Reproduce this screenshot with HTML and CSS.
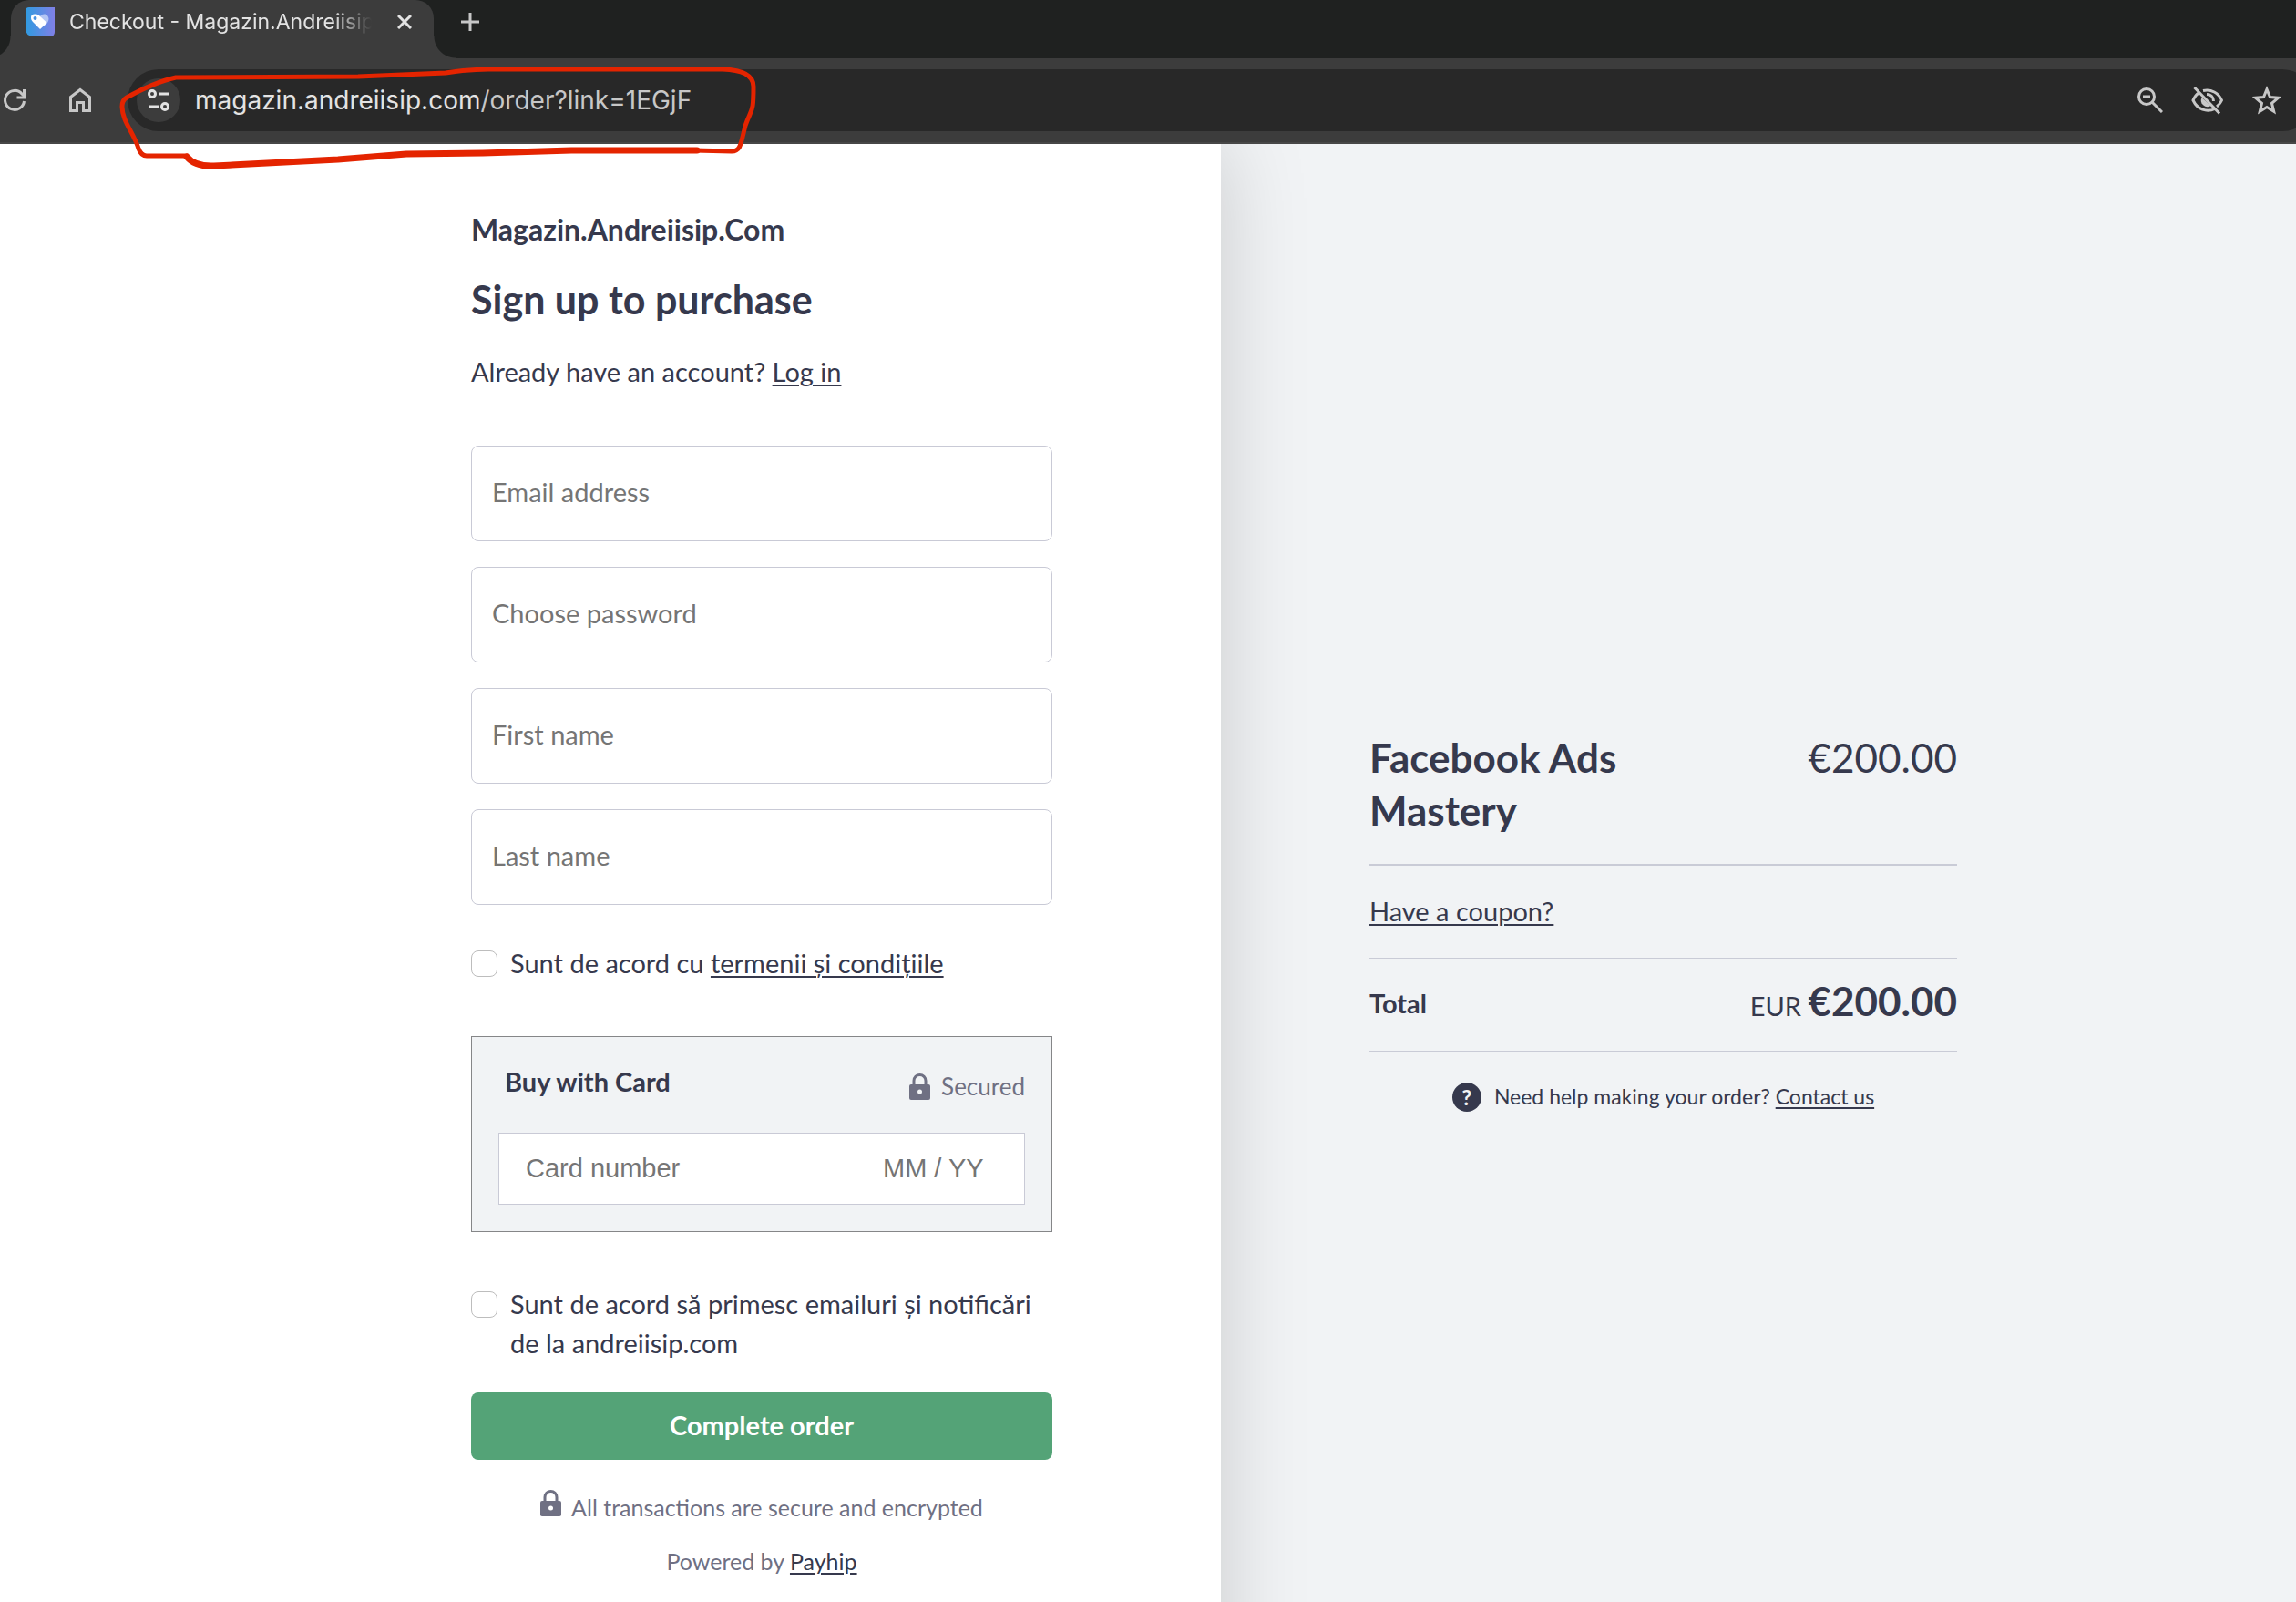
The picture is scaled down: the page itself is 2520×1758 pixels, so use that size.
FILE: index.html
```html
<!DOCTYPE html>
<html lang="ro">
<head>
    <meta charset="UTF-8">
    <meta name="viewport" content="width=device-width, initial-scale=1.0">
    <title>Checkout - Magazin.Andreiisip.Com</title>
    <link rel="stylesheet" href="styles.css">
</head>
<body>

    <!-- Browser -->
    <div class="browser">
        <div class="tab-strip">
            <div class="tab">
                <svg class="favicon" viewBox="0 0 32 32">
                    <defs>
                        <linearGradient id="fav" x1="0" y1="0" x2="1" y2="0">
                            <stop offset="0" stop-color="#2f9be0"/>
                            <stop offset="1" stop-color="#8080e6"/>
                        </linearGradient>
                    </defs>
                    <path d="M4 0h28v27q0 5-5 5H9Q0 32 0 23V4q0-4 4-4z" fill="url(#fav)"/>
                    <path d="M16 10c2-3 6-3 8-1 2 2.500 2 5 0 8l-4 4z" fill="#b4c6f4"/>
                    <path d="M6 11c0-2 1.500-3.500 4-3.500 2 0 3.500 0 5 1.500l8.500 8-7.500 7-8-8c-1.500-1.500-2-3-2-5z" fill="#fff"/>
                    <circle cx="10.500" cy="12" r="2" fill="#4a93e2"/>
                </svg>
                <span class="tab-title">Checkout - Magazin.Andreiisip.Com</span>
                <button class="icon-btn" aria-label="Close tab">
                    <svg width="16" height="16" viewBox="0 0 16 16"><path d="M1 1l14 14M15 1L1 15" stroke="#e3e3e3" stroke-width="3"/></svg>
                </button>
            </div>
            <button class="icon-btn" aria-label="New tab">
                <svg width="20" height="20" viewBox="0 0 20 20"><path d="M10 0v20M0 10h20" stroke="#c7c7c7" stroke-width="3"/></svg>
            </button>
        </div>
        <div class="toolbar">
            <button class="icon-btn" aria-label="Reload">
                <svg width="28" height="28" viewBox="0 0 28 28" fill="none" stroke="#c7c7c7" stroke-width="3"><path d="M24.500 15A10.500 10.500 0 1 1 22 7l3 3"/><path d="M24.500 2v9h-8"/></svg>
            </button>
            <button class="icon-btn" aria-label="Home">
                <svg width="28" height="28" viewBox="0 0 28 28" fill="none" stroke="#c7c7c7" stroke-width="3"><path d="M3.500 10.500L14 2.500l10.500 8v15H17.500v-9h-7v9h-7z"/></svg>
            </button>
            <div class="omnibox">
                <button class="site-info" aria-label="Site information">
                    <svg width="26" height="26" viewBox="0 0 26 26" fill="none" stroke="#e3e3e3" stroke-width="3"><circle cx="6" cy="6" r="3.500"/><path d="M13 6h11M2 20h11"/><circle cx="20" cy="20" r="3.500"/></svg>
                </button>
                <div class="url">magazin.andreiisip.com<span>/order?link=1EGjF</span></div>
                <div class="omnibox-actions">
                    <button class="icon-btn" aria-label="Zoom out">
                        <svg width="28" height="28" viewBox="0 0 28 28" fill="none" stroke="#c7c7c7" stroke-width="3"><circle cx="10" cy="10" r="8.500"/><path d="M16 16l11 11M6 10h8"/></svg>
                    </button>
                    <button class="icon-btn" aria-label="Tracking protection">
                        <svg width="36" height="32" viewBox="0 0 36 32" fill="none" stroke="#c7c7c7" stroke-width="3"><path d="M13 5.500c9-2 17 2.500 20.500 10.500-1 2.500-3 5-5.500 7M8 8c-3 2-4.500 4.500-6 8 5 10.500 15 13.500 24 9.500"/><path d="M11.500 13a7 7 0 0 0 10 9z" fill="#c7c7c7" stroke="none"/><path d="M17 9.500c4 0 7.500 2.500 7.500 7.500"/><path d="M3.500 2L31 30.500"/></svg>
                    </button>
                    <button class="icon-btn" aria-label="Bookmark">
                        <svg width="32" height="32" viewBox="0 0 32 32" fill="none" stroke="#c7c7c7" stroke-width="3"><path d="M16 4l3.500 8.500 9 .8-7 6 2.200 9-7.700-4.800-7.700 4.800 2.200-9-7-6 9-.8z"/></svg>
                    </button>
                </div>
            </div>
        </div>

        <!-- Marker line round the address -->
        <svg class="marker" width="700" height="130" viewBox="130 65 700 130" fill="none" stroke="#e42400" stroke-linecap="round" stroke-linejoin="round">
            <path stroke-width="5" d="M205 171h-44q-6 0-9-8C147 146 134 133 134 117q0-7 5-10Q170 90 193 85L393 84 489 80Q515 76 536 76H793Q827 77 827 95C827 125 825 118 818 138C813 158 813 166 803 166L760 165"/>
            <path stroke-width="7" d="M205 172Q214 183 235 182L371 175 446 169 530 168 627 165H765"/>
        </svg>
    </div>

    <!-- Checkout -->
    <div class="checkout">
        <main class="form-side">
            <form class="form">
                <div class="shop-name">Magazin.Andreiisip.Com</div>
                <h1>Sign up to purchase</h1>
                <p class="login">Already have an account? <a href="#">Log in</a></p>

                <div class="fields">
                    <input class="field" type="email" placeholder="Email address" aria-label="Email address">
                    <input class="field" type="password" placeholder="Choose password" aria-label="Choose password">
                    <input class="field" type="text" placeholder="First name" aria-label="First name">
                    <input class="field" type="text" placeholder="Last name" aria-label="Last name">
                </div>

                <div class="check">
                    <input type="checkbox" id="terms">
                    <label for="terms">Sunt de acord cu <a href="#">termenii și condițiile</a></label>
                </div>

                <div class="card-box">
                    <div class="card-head">
                        <h2>Buy with Card</h2>
                        <div class="secured">
                            <svg class="lock" viewBox="0 0 23 29"><path d="M5 13V8a6.500 6.500 0 0 1 13 0v5" fill="none" stroke="#6f7083" stroke-width="3"/><rect y="12" width="23" height="17" rx="2" fill="#6f7083"/><circle cx="11.500" cy="20" r="2.500" fill="#f1f3f5"/></svg>
                            <span>Secured</span>
                        </div>
                    </div>
                    <div class="card-field">
                        <input class="card-number" type="text" placeholder="Card number" aria-label="Card number">
                        <input class="card-date" type="text" placeholder="MM / YY" aria-label="MM / YY">
                    </div>
                </div>

                <div class="check">
                    <input type="checkbox" id="news">
                    <label for="news">Sunt de acord să primesc emailuri și notificări de la andreiisip.com</label>
                </div>

                <button class="submit" type="submit">Complete order</button>

                <div class="note">
                    <svg class="lock" viewBox="0 0 23 29"><path d="M5 13V8a6.500 6.500 0 0 1 13 0v5" fill="none" stroke="#6f7083" stroke-width="3"/><rect y="12" width="23" height="17" rx="2" fill="#6f7083"/><circle cx="11.500" cy="20" r="2.500" fill="#fff"/></svg>
                    <span>All transactions are secure and encrypted</span>
                </div>
                <p class="powered">Powered by <a href="#">Payhip</a></p>
            </form>
        </main>

        <aside class="summary-side">
            <div class="summary">
                <div class="product">
                    <div class="product-name">Facebook Ads Mastery</div>
                    <div class="product-price">€200.00</div>
                </div>
                <div class="coupon"><a href="#">Have a coupon?</a></div>
                <div class="total">
                    <span class="total-label">Total</span>
                    <span class="total-sum">EUR <b>€200.00</b></span>
                </div>
                <div class="help">
                    <span class="help-icon">?</span>
                    <span>Need help making your order? <a href="#">Contact us</a></span>
                </div>
            </div>
        </aside>
    </div>

</body>
</html>
```
FILE: styles.css
```css
* {
    box-sizing: border-box;
}
body {
    display: flex;
    flex-direction: column;
    min-height: 100vh;
    margin: 0;
    overflow: hidden;
    font-family: Lato, "Liberation Sans", sans-serif;
    font-size: 29px;
    line-height: 43px;
    color: #36394d;
    background: #fff;
}
a {
    color: inherit;
    text-decoration: underline;
    text-decoration-thickness: 2px;
    text-underline-offset: 3px;
}
h1, h2, p {
    margin: 0;
}
button, input {
    font-family: inherit;
    font-size: inherit;
}

/* Browser */
.browser {
    position: relative;
    z-index: 2;
    font-family: Inter, "Liberation Sans", sans-serif;
    background: #3c3c3c;
}
.tab-strip {
    display: flex;
    align-items: flex-start;
    gap: 30px;
    height: 64px;
    padding-left: 12px;
    background: #1f2120;
}
.tab {
    display: flex;
    align-items: center;
    width: 464px;
    height: 64px;
    padding: 0 24px 16px 16px;
    background: #3c3c3c;
    border-radius: 20px 20px 0 0;
    position: relative;
}
.tab::before,
.tab::after {
    content: "";
    position: absolute;
    bottom: 0;
    width: 24px;
    height: 24px;
}
.tab::before {
    right: 100%;
    background: radial-gradient(circle at 0 0, transparent 23px, #3c3c3c 24px);
}
.tab::after {
    left: 100%;
    background: radial-gradient(circle at 100% 0, transparent 23px, #3c3c3c 24px);
}
.favicon {
    width: 32px;
    height: 32px;
    flex: none;
    margin-right: 16px;
}
.tab-title {
    flex: 1;
    overflow: hidden;
    white-space: nowrap;
    font-size: 23px;
    line-height: 32px;
    color: #e3e3e3;
    margin-right: 24px;
    -webkit-mask-image: linear-gradient(to right, #000 290px, transparent 332px);
    mask-image: linear-gradient(to right, #000 290px, transparent 332px);
}
.icon-btn {
    display: flex;
    align-items: center;
    justify-content: center;
    height: 48px;
    padding: 0;
    border: none;
    background: none;
    cursor: pointer;
}
.toolbar {
    display: flex;
    align-items: center;
    height: 94px;
    padding: 12px 0 12px 2px;
    gap: 44px;
    border-bottom: 2px solid #474747;
}
.omnibox {
    display: flex;
    align-items: center;
    flex: 1;
    height: 68px;
    margin: 0 -19px 0 -6px;
    padding: 0 35px 0 10px;
    border-radius: 34px;
    background: #282828;
}
.site-info {
    display: flex;
    align-items: center;
    justify-content: center;
    width: 48px;
    height: 48px;
    padding: 0;
    border: none;
    border-radius: 50%;
    background: #3c3c3c;
    cursor: pointer;
}
.url {
    flex: 1;
    margin-left: 16px;
    font-size: 28px;
    color: #e3e3e3;
}
.url span {
    color: #c7c7c7;
}
.omnibox-actions {
    display: flex;
    gap: 31px;
}
.marker {
    position: absolute;
    left: 130px;
    top: 65px;
}

/* Checkout */
.checkout {
    display: grid;
    grid-template-columns: 1340fr 1180fr;
    flex: 1;
}
.form-side {
    position: relative;
    z-index: 1;
    margin-bottom: -100px;
    padding: 72px 185px 0 0;
    background: #fff;
    box-shadow: 0 0 90px rgba(0, 0, 0, 0.17);
}
.form {
    width: 638px;
    margin-left: auto;
}
.shop-name {
    font-size: 32px;
    font-weight: bold;
}
h1 {
    margin-top: 27px;
    font-size: 43px;
    line-height: 58px;
    font-weight: bold;
}
.login {
    margin-top: 28px;
}
.fields {
    display: flex;
    flex-direction: column;
    gap: 28px;
    margin-top: 60px;
}
.field {
    width: 100%;
    height: 105px;
    padding: 0 22px 4px;
    border: 1px solid #c9cad6;
    border-radius: 8px;
    color: #36394d;
    background: #fff;
}
.field::placeholder,
.card-field input::placeholder {
    color: #757575;
}
.check {
    display: flex;
    align-items: flex-start;
    gap: 14px;
    margin-top: 42px;
}
.check input {
    appearance: none;
    flex: none;
    width: 29px;
    height: 29px;
    margin: 8px 0 0;
    border: 1px solid #bdbdbd;
    border-radius: 8px;
    background: #fff;
}
.card-box {
    margin-top: 59px;
    padding: 27px 29px 29px;
    border: 1px solid #858688;
    background: #f1f3f5;
}
.card-head {
    display: flex;
    justify-content: space-between;
    padding-left: 7px;
}
h2 {
    font-size: 29px;
    font-weight: bold;
}
.secured {
    display: flex;
    align-items: center;
    gap: 12px;
    padding-top: 6px;
    font-size: 26px;
    color: #6f7083;
}
.lock {
    width: 23px;
    height: 29px;
    flex: none;
}
.card-field {
    display: flex;
    height: 79px;
    margin-top: 29px;
    padding: 0 29px;
    border: 1px solid #c9cad6;
    background: #fff;
}
.card-field input {
    border: none;
    padding: 0;
    font-family: "Liberation Sans", Arial, sans-serif;
    font-size: 29px;
    background: none;
}
.card-number {
    flex: 1;
    min-width: 0;
}
.card-date {
    width: 126px;
}
.card-box + .check {
    margin-top: 57px;
}
.submit {
    width: 100%;
    height: 74px;
    margin-top: 33px;
    padding: 0 0 4px;
    border: none;
    border-radius: 8px;
    font-weight: bold;
    color: #fff;
    background: #54a377;
    cursor: pointer;
}
.note {
    display: flex;
    justify-content: center;
    gap: 11px;
    margin-top: 31px;
    font-size: 25px;
    color: #6f7083;
}
.note .lock {
    margin-top: 2px;
}
.powered {
    margin-top: 16px;
    text-align: center;
    font-size: 25px;
    color: #6f7083;
}
.powered a {
    color: #36394d;
}
.summary-side {
    padding: 644px 163px 0;
    background: #f1f3f5;
}
.summary {
    max-width: 645px;
}
.product {
    display: flex;
    justify-content: space-between;
    padding-bottom: 30px;
    border-bottom: 2px solid #c9cbd6;
    font-size: 44px;
    line-height: 58px;
}
.product-name {
    width: 300px;
    font-weight: bold;
}
.coupon {
    padding: 28px 0 30px;
    border-bottom: 1px solid #c9cbd6;
}
.total {
    display: flex;
    align-items: center;
    justify-content: space-between;
    height: 102px;
    padding-bottom: 4px;
    border-bottom: 1px solid #c9cbd6;
}
.total-label {
    font-weight: bold;
}
.total b {
    font-size: 44px;
}
.help {
    display: flex;
    align-items: center;
    justify-content: center;
    gap: 14px;
    margin-top: 28px;
    font-size: 23px;
}
.help-icon {
    width: 32px;
    height: 32px;
    border-radius: 50%;
    line-height: 32px;
    text-align: center;
    font-weight: bold;
    color: #f1f3f5;
    background: #36394d;
}
```
